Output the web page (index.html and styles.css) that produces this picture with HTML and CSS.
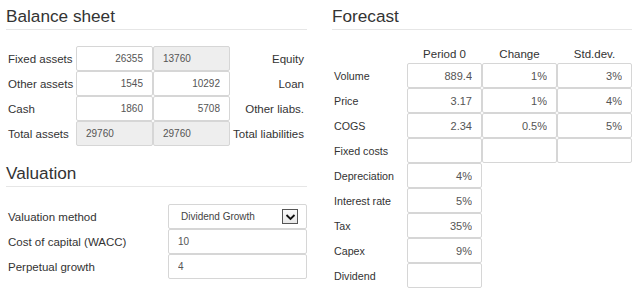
FILE: index.html
```html
<!DOCTYPE html>
<html>
<head>
<meta charset="utf-8">
<link rel="stylesheet" href="styles.css">
</head>
<body>
<div class="page">
  <div class="panel left">
    <h2 class="heading">Balance sheet</h2>
    <div class="balance">
      <span class="lbl">Fixed assets</span>
      <input class="fld num" value="26355">
      <input class="fld ro" value="13760" readonly>
      <span class="rlbl">Equity</span>

      <span class="lbl">Other assets</span>
      <input class="fld num" value="1545">
      <input class="fld num" value="10292">
      <span class="rlbl">Loan</span>

      <span class="lbl">Cash</span>
      <input class="fld num" value="1860">
      <input class="fld num" value="5708">
      <span class="rlbl">Other liabs.</span>

      <span class="lbl">Total assets</span>
      <input class="fld ro" value="29760" readonly>
      <input class="fld ro" value="29760" readonly>
      <span class="rlbl">Total liabilities</span>
    </div>

    <h2 class="heading val-head">Valuation</h2>
    <div class="valuation">
      <span class="lbl">Valuation method</span>
      <div class="fld select">
        <span class="sel-text">Dividend Growth</span>
        <span class="sel-btn"><svg width="11" height="8" viewBox="0 0 11 8"><path d="M1.5 2 L5.5 6 L9.5 2" fill="none" stroke="#111" stroke-width="1.8"/></svg></span>
      </div>
      <span class="lbl">Cost of capital (WACC)</span>
      <input class="fld txt" value="10">
      <span class="lbl">Perpetual growth</span>
      <input class="fld txt" value="4">
    </div>
  </div>

  <div class="panel right">
    <h2 class="heading">Forecast</h2>
    <div class="forecast">
      <span></span>
      <span class="colh">Period 0</span>
      <span class="colh">Change</span>
      <span class="colh">Std.dev.</span>

      <span class="lbl">Volume</span>
      <input class="fld num" value="889.4">
      <input class="fld num" value="1%">
      <input class="fld num" value="3%">

      <span class="lbl">Price</span>
      <input class="fld num" value="3.17">
      <input class="fld num" value="1%">
      <input class="fld num" value="4%">

      <span class="lbl">COGS</span>
      <input class="fld num" value="2.34">
      <input class="fld num" value="0.5%">
      <input class="fld num" value="5%">

      <span class="lbl">Fixed costs</span>
      <input class="fld num" value="">
      <input class="fld num" value="">
      <input class="fld num" value="">

      <span class="lbl">Depreciation</span>
      <input class="fld num" value="4%">
      <span></span><span></span>

      <span class="lbl">Interest rate</span>
      <input class="fld num" value="5%">
      <span></span><span></span>

      <span class="lbl">Tax</span>
      <input class="fld num" value="35%">
      <span></span><span></span>

      <span class="lbl">Capex</span>
      <input class="fld num" value="9%">
      <span></span><span></span>

      <span class="lbl">Dividend</span>
      <input class="fld num" value="">
      <span></span><span></span>
    </div>
  </div>
</div>
</body>
</html>
```

FILE: styles.css
```css
html, body {
  margin: 0;
  padding: 0;
  background: #fff;
}
body {
  font-family: "Liberation Sans", Arial, sans-serif;
  font-size: 11.5px;
  color: #333;
}
.page {
  display: flex;
  padding-left: 6px;
}
.panel.left {
  width: 301px;
}
.panel.right {
  width: 300px;
  margin-left: 25px;
}
.heading {
  margin: 0;
  padding: 6px 0 3px 0;
  font-size: 17.2px;
  line-height: 20px;
  font-weight: normal;
  color: #333;
  border-bottom: 1px solid #e6e6e6;
}
.val-head {
  margin-top: 11px;
}
.lbl {
  display: flex;
  align-items: center;
  padding-left: 2px;
  white-space: nowrap;
  color: #333;
}
.fld {
  box-sizing: border-box;
  height: 25px;
  margin: 0;
  border: 1px solid #d6d6d6;
  border-radius: 2px;
  background: #fff;
  font-family: "Liberation Sans", Arial, sans-serif;
  font-size: 10px;
  color: #555;
  outline: none;
  width: 100%;
}
.fld.num {
  text-align: right;
  padding: 0 9px 0 4px;
}
.fld.ro {
  text-align: left;
  padding: 0 4px 0 9px;
  background: #eeeeee;
}
.fld.txt {
  text-align: left;
  padding: 0 4px 0 9px;
}
.balance {
  margin-top: 16px;
  display: grid;
  grid-template-columns: 70px 77px 77px 1fr;
  grid-auto-rows: 25px;
}
.rlbl {
  display: flex;
  align-items: center;
  justify-content: flex-end;
  padding-right: 3px;
  white-space: nowrap;
}
.valuation {
  margin-top: 17px;
  display: grid;
  grid-template-columns: 162px 139px;
  grid-auto-rows: 25px;
}
.select {
  display: flex;
  align-items: center;
  justify-content: space-between;
  padding: 0 8px 0 12px;
  color: #444;
}
.sel-btn {
  box-sizing: border-box;
  width: 16px;
  height: 15px;
  border: 1px solid #555;
  background: linear-gradient(#fafafa, #e8e8e8);
  display: flex;
  align-items: center;
  justify-content: center;
}
.sel-btn svg {
  display: block;
}
.forecast {
  margin-top: 15px;
  display: grid;
  grid-template-columns: 75px 75px 75px 75px;
  grid-template-rows: 18px;
  grid-auto-rows: 25px;
}
.forecast .lbl {
  font-size: 10.7px;
}
.forecast .fld {
  font-size: 11px;
}
.colh {
  display: flex;
  align-items: center;
  justify-content: center;
  color: #333;
}
```
